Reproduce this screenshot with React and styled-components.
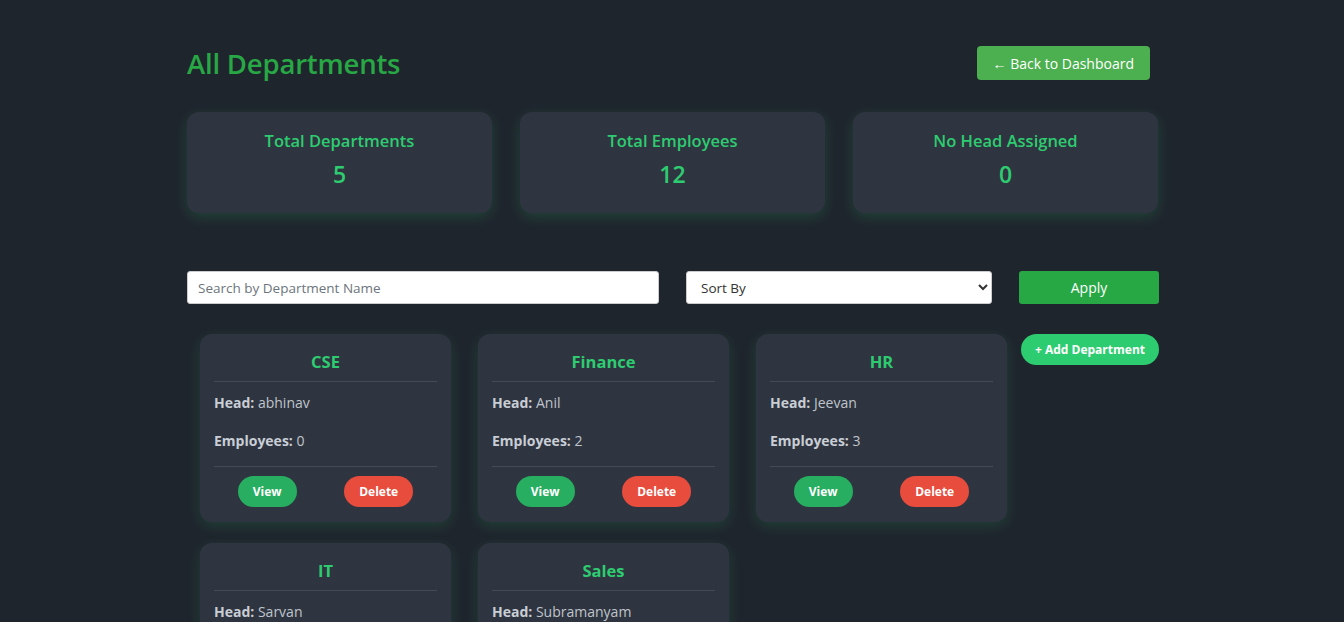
import React from "react";
import styled, { createGlobalStyle } from "styled-components";

const Global = createGlobalStyle`
  html, body { margin: 0; padding: 0; background: #1f252d; }
  body { font-family: "Open Sans", "Noto Sans", sans-serif; color: #c9ced6; }
  * { box-sizing: border-box; }
`;

const Page = styled.div`
  width: 972px;
  margin-left: calc(50% - 485px);
  padding-top: 40px;
`;

const Header = styled.div`
  display: flex;
  align-items: center;
  justify-content: space-between;
  padding-right: 9px;
  height: 46px;
`;

const Title = styled.h1`
  margin: 0;
  font-size: 27.5px;
  font-weight: 600;
  color: #28a745;
  letter-spacing: -0.2px;
`;

const BackButton = styled.button`
  height: 34px;
  padding: 0 16px;
  background: #4caf50;
  color: #fff;
  border: none;
  border-radius: 4px;
  font-family: inherit;
  font-size: 14px;
  cursor: pointer;
`;

const Stats = styled.div`
  display: grid;
  grid-template-columns: repeat(3, 305px);
  gap: 28px;
  margin-top: 26px;
`;

const StatCard = styled.div`
  height: 101px;
  background: #2f3540;
  border-radius: 12px;
  box-shadow: 0 4px 14px rgba(46, 204, 113, 0.18);
  display: flex;
  flex-direction: column;
  align-items: center;
  padding-top: 17px;
`;

const StatLabel = styled.div`
  font-size: 16.5px;
  font-weight: 600;
  color: #2ecc71;
  line-height: 24px;
`;

const StatValue = styled.div`
  font-size: 23px;
  font-weight: 600;
  color: #2ecc71;
  line-height: 32px;
  margin-top: 5px;
`;

const Controls = styled.div`
  display: flex;
  gap: 27px;
  margin-top: 58px;
  height: 33px;
`;

const SearchInput = styled.input`
  width: 472px;
  height: 33px;
  border: 1px solid #ccc;
  border-radius: 3px;
  padding: 0 10px;
  font-family: inherit;
  font-size: 13.5px;
  color: #333;
  background: #fff;
  &::placeholder { color: #6c757d; }
`;

const Select = styled.select`
  width: 306px;
  height: 33px;
  border: 1px solid #ccc;
  border-radius: 3px;
  padding: 0 10px;
  font-family: inherit;
  font-size: 13.5px;
  color: #333;
  background: #fff;
`;

const ApplyButton = styled.button`
  width: 140px;
  height: 33px;
  background: #28a745;
  color: #fff;
  border: none;
  border-radius: 3px;
  font-family: inherit;
  font-size: 14px;
  cursor: pointer;
`;

const Body = styled.div`
  display: flex;
  align-items: flex-start;
  gap: 14px;
  margin-top: 30px;
  padding-left: 13px;
`;

const Grid = styled.div`
  display: grid;
  grid-template-columns: repeat(3, 251px);
  column-gap: 27px;
  row-gap: 21px;
`;

const Card = styled.div`
  background: #2f3540;
  border-radius: 12px;
  box-shadow: 0 4px 14px rgba(46, 204, 113, 0.16);
  padding: 14px 14px 15px;
`;

const CardTitle = styled.h3`
  margin: 0;
  text-align: center;
  font-size: 16.5px;
  font-weight: 700;
  color: #2ecc71;
  line-height: 27px;
  padding-bottom: 6px;
  border-bottom: 1px solid #444b57;
`;

const Info = styled.p`
  margin: ${(p) => p.$mt}px 0 0;
  font-size: 14px;
  line-height: 20px;
  color: #bfc4cc;
  b { color: #c9ced6; font-weight: 700; }
`;

const Actions = styled.div`
  display: flex;
  justify-content: space-around;
  margin-top: 15px;
  padding-top: 9px;
  border-top: 1px solid #444b57;
`;

const Pill = styled.button`
  height: 31px;
  padding: 0 ${(p) => p.$px}px;
  border: none;
  border-radius: 16px;
  background: ${(p) => p.$bg};
  color: #fff;
  font-family: inherit;
  font-size: 12px;
  font-weight: 700;
  cursor: pointer;
`;

const AddButton = styled.button`
  width: 138px;
  height: 31px;
  border: none;
  border-radius: 16px;
  background: #2ecc71;
  color: #fff;
  font-family: inherit;
  font-size: 12px;
  font-weight: 700;
  cursor: pointer;
`;

const departments = [
  { name: "CSE", head: "abhinav", employees: 0 },
  { name: "Finance", head: "Anil", employees: 2 },
  { name: "HR", head: "Jeevan", employees: 3 },
  { name: "IT", head: "Sarvan", employees: 4 },
  { name: "Sales", head: "Subramanyam", employees: 3 },
];

export default function App() {
  return (
    <>
      <Global />
      <Page>
        <Header>
          <Title>All Departments</Title>
          <BackButton>← Back to Dashboard</BackButton>
        </Header>
        <Stats>
          <StatCard>
            <StatLabel>Total Departments</StatLabel>
            <StatValue>5</StatValue>
          </StatCard>
          <StatCard>
            <StatLabel>Total Employees</StatLabel>
            <StatValue>12</StatValue>
          </StatCard>
          <StatCard>
            <StatLabel>No Head Assigned</StatLabel>
            <StatValue>0</StatValue>
          </StatCard>
        </Stats>
        <Controls>
          <SearchInput placeholder="Search by Department Name" />
          <Select defaultValue="">
            <option value="">Sort By</option>
            <option value="name">Name</option>
            <option value="employees">Employees</option>
          </Select>
          <ApplyButton>Apply</ApplyButton>
        </Controls>
        <Body>
          <Grid>
            {departments.map((d) => (
              <Card key={d.name}>
                <CardTitle>{d.name}</CardTitle>
                <Info $mt={11}>
                  <b>Head:</b> {d.head}
                </Info>
                <Info $mt={18}>
                  <b>Employees:</b> {d.employees}
                </Info>
                <Actions>
                  <Pill $bg="#27ae60" $px={15}>View</Pill>
                  <Pill $bg="#e74c3c" $px={15}>Delete</Pill>
                </Actions>
              </Card>
            ))}
          </Grid>
          <AddButton>+ Add Department</AddButton>
        </Body>
      </Page>
    </>
  );
}
